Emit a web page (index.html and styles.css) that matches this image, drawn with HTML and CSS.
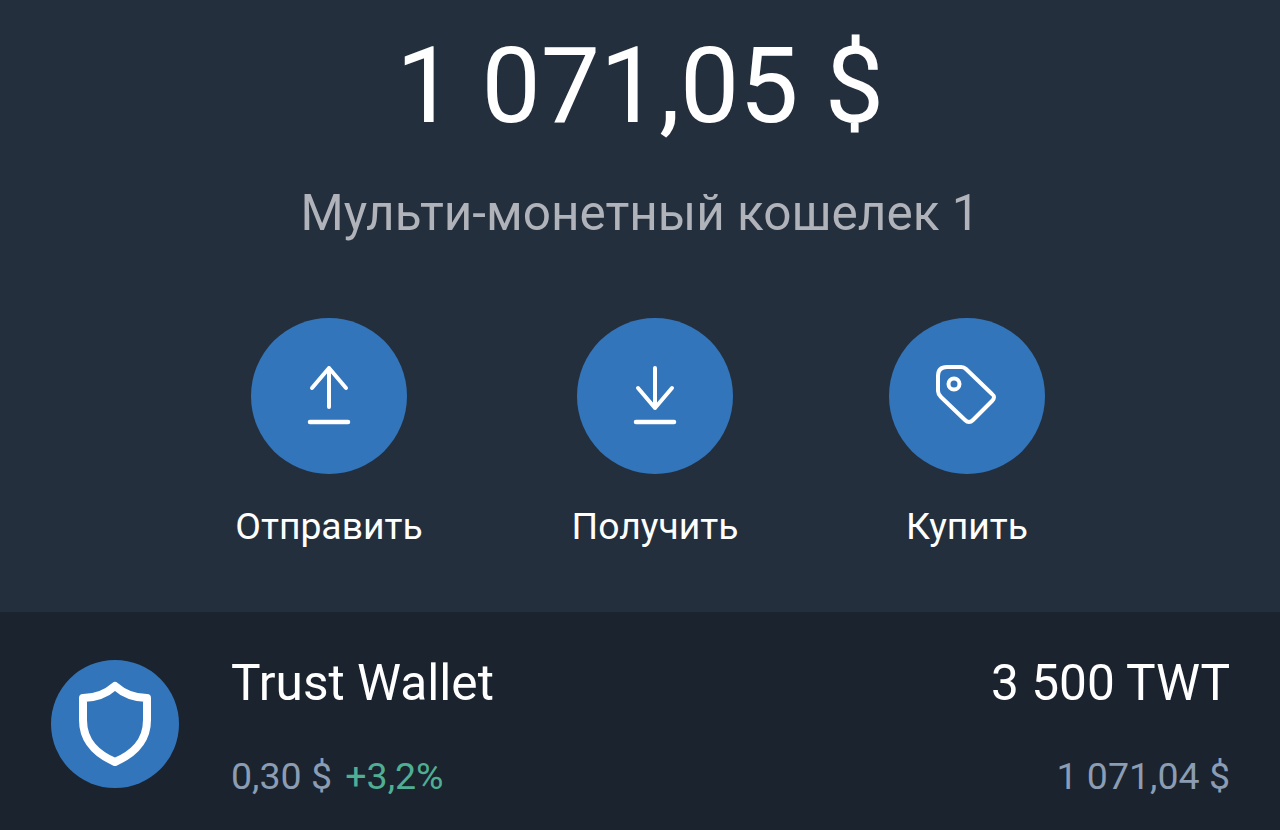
FILE: index.html
```html
<!DOCTYPE html>
<html>
<head>
    <title>Кошелек</title>
    <link rel="stylesheet" href="styles.css">
</head>
<body>
    <section class="wallet">
        <h1 class="balance">1 071,05 $</h1>
        <p class="wallet-name">Мульти-монетный кошелек 1</p>

        <div class="actions">
            <div class="action">
                <div class="action-btn">
                    <svg width="48" height="64" viewBox="0 0 48 64">
                        <path class="stroke" d="M24 4V43M7 24L24 4L41 24"/>
                        <path class="stroke bar" d="M5 58H43"/>
                    </svg>
                </div>
                <span class="action-label">Отправить</span>
            </div>
            <div class="action">
                <div class="action-btn">
                    <svg width="48" height="64" viewBox="0 0 48 64">
                        <path class="stroke" d="M24 4V44M7 24L24 44L41 24"/>
                        <path class="stroke bar" d="M5 58H43"/>
                    </svg>
                </div>
                <span class="action-label">Получить</span>
            </div>
            <div class="action">
                <div class="action-btn">
                    <svg width="64" height="64" viewBox="0 0 64 64">
                        <path class="stroke" d="M12 3H26Q29 3 31 5L57 30Q61 33 57 37L38 56Q34 60 30 56L6 33Q3 30 3 27V12Q3 3 12 3Z"/>
                        <circle class="stroke" cx="19" cy="20" r="5.5"/>
                    </svg>
                </div>
                <span class="action-label">Купить</span>
            </div>
        </div>
    </section>

    <section class="token">
        <div class="token-logo">
            <svg width="74" height="86" viewBox="0 0 74 86">
                <path class="shield" d="M37 5C28 13 17 17 5 17V39C5 61 19 73 37 81C55 73 69 61 69 39V17C57 17 46 13 37 5Z"/>
            </svg>
        </div>
        <div class="token-info">
            <div class="token-row">
                <span class="token-name">Trust Wallet</span>
                <span class="token-amount">3 500 TWT</span>
            </div>
            <div class="token-row">
                <span class="token-price">0,30 $ <span class="token-change">+3,2%</span></span>
                <span class="token-value">1 071,04 $</span>
            </div>
        </div>
    </section>
</body>
</html>
```

FILE: styles.css
```css
* {
    box-sizing: border-box;
}

html, body {
    margin: 0;
    height: 830px;
    overflow: hidden;
}

body {
    display: flex;
    flex-direction: column;
    background-color: #242f3e;
    font-family: Roboto, "Liberation Sans", sans-serif;
    color: #ffffff;
}

/* Top part with the balance */
.wallet {
    height: 612px;
    padding-top: 25px;
    text-align: center;
}

.balance {
    margin: 0;
    font-size: 105.5px;
    font-weight: 400;
    line-height: 122px;
}

.wallet-name {
    margin: 37px 0 0;
    font-size: 49.5px;
    line-height: 58px;
    color: #b0b3b9;
}

.actions {
    display: grid;
    grid-template-columns: 326px 312px 200px;
    margin-top: 76px;
    padding-left: 229px;
}

.action {
    display: flex;
    flex-direction: column;
    align-items: center;
    width: 200px;
}

.action-btn {
    display: flex;
    justify-content: center;
    align-items: center;
    width: 156px;
    height: 156px;
    border-radius: 50%;
    background-color: #3375bb;
}

.action-label {
    margin-top: 31px;
    font-size: 37.3px;
    line-height: 43px;
    white-space: nowrap;
}

.stroke {
    fill: none;
    stroke: #ffffff;
    stroke-width: 4;
    stroke-linecap: round;
    stroke-linejoin: round;
}

.bar {
    stroke-width: 4.5;
}

/* Token row */
.token {
    flex: 1;
    display: flex;
    align-items: center;
    padding: 6px 50px 0 51px;
    background-color: #1a232e;
}

.token-logo {
    flex: none;
    display: flex;
    justify-content: center;
    align-items: center;
    width: 128px;
    height: 128px;
    border-radius: 50%;
    background-color: #3375bb;
}

.shield {
    fill: none;
    stroke: #ffffff;
    stroke-width: 8;
    stroke-linejoin: round;
}

.token-info {
    flex: 1;
    margin-left: 52px;
    padding-top: 5px;
}

.token-row {
    display: flex;
    justify-content: space-between;
    align-items: baseline;
}

.token-row + .token-row {
    margin-top: 43px;
}

.token-name, .token-amount {
    font-size: 49.6px;
    line-height: 56px;
}

.token-price, .token-value {
    font-size: 37.5px;
    line-height: 44px;
    color: #8b9cb3;
}

.token-change {
    margin-left: 4px;
    color: #4fae94;
}
```
